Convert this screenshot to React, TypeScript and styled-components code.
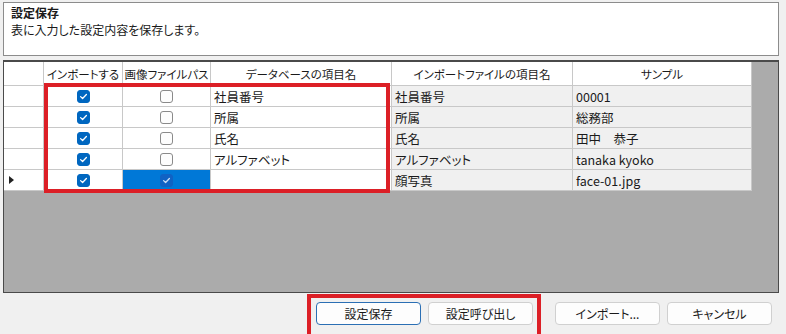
import styled, { createGlobalStyle } from "styled-components"

const GlobalStyle = createGlobalStyle`
  html, body {
    margin: 0;
    padding: 0;
    background: #f0f0f0;
    font-family: "Noto Sans CJK JP", "Noto Sans", sans-serif;
    font-size: 12px;
    color: #1a1a1a;
    font-feature-settings: "palt";
  }
`

const Page = styled.div`
  width: 786px;
  height: 334px;
  padding: 2px 7px 0 3px;
  box-sizing: border-box;
  display: flex;
  flex-direction: column;
  gap: 4px;
`

const Description = styled.div`
  height: 54px;
  box-sizing: border-box;
  background: #fff;
  border: 1px solid #8c8c8c;
  padding: 1px 7px 0;
  line-height: 17px;
`

const DescTitle = styled.div`
  font-weight: 700;
`

const GridWrap = styled.div`
  position: relative;
  height: 233px;
  box-sizing: border-box;
  background: #ababab;
  border: 1px solid #4a4a4a;
  border-width: 2px 1px 1px 1px;
`

const Grid = styled.div`
  display: grid;
  grid-template-columns: 40px 79px 88px 181px 181px 179px;
  width: max-content;
`

const Cell = styled.div<{ $head?: boolean; $center?: boolean; $ro?: boolean; $sel?: boolean }>`
  background: ${p => (p.$sel ? "#0078d7" : p.$ro ? "#f0f0f0" : "#fff")};
  border-right: 1px solid #c8c8c8;
  border-bottom: 1px solid #c8c8c8;
  display: flex;
  align-items: center;
  justify-content: ${p => (p.$center || p.$head ? "center" : "flex-start")};
  padding: 0 3px;
  box-sizing: border-box;
  white-space: nowrap;
  overflow: hidden;
  height: ${p => (p.$head ? "24px" : "21px")};
  font-size: ${p => (p.$head ? "11.5px" : "12.5px")};
`

const RowHead = styled(Cell)`
  padding-left: 5px;
  justify-content: flex-start;
`

const Arrow = styled.span`
  width: 0;
  height: 0;
  border-top: 4px solid transparent;
  border-bottom: 4px solid transparent;
  border-left: 5px solid #222;
`

const Box = styled.span<{ $checked?: boolean; $sel?: boolean }>`
  width: 13px;
  height: 13px;
  box-sizing: border-box;
  border-radius: 3px;
  display: flex;
  align-items: center;
  justify-content: center;
  background: ${p => (p.$sel ? "#1062c4" : p.$checked ? "#0067c0" : "#fdfdfd")};
  border: 1px solid ${p => (p.$checked ? (p.$sel ? "#1062c4" : "#0067c0") : "#8a8a8a")};
`

const Highlight = styled.div`
  position: absolute;
  left: 40px;
  top: 21px;
  width: 346px;
  height: 110px;
  border: 4px solid #dc1f26;
  box-sizing: border-box;
  pointer-events: none;
`

const Footer = styled.div`
  display: flex;
  align-items: flex-start;
  padding-left: 304px;
  height: 40px;
  margin-top: -3px;
`

const SaveGroup = styled.div`
  display: flex;
  gap: 7px;
  padding: 4px 4px 0 5px;
  height: 40px;
  box-sizing: border-box;
  border: 4px solid #dc1f26;
  border-bottom: none;
`

const Button = styled.button<{ $primary?: boolean }>`
  width: 105px;
  height: 23px;
  font-family: "Noto Sans CJK JP", "Noto Sans", sans-serif;
  font-feature-settings: "palt";
  font-size: 12px;
  color: #1a1a1a;
  background: #fdfdfd;
  border: 1px solid ${p => (p.$primary ? "#2b6fb4" : "#d0d0d0")};
  border-radius: 4px;
  padding: 0;
  line-height: 21px;
`

const OtherGroup = styled.div`
  display: flex;
  gap: 7px;
  margin-left: 14px;
  margin-top: 8px;
`

function Check({ checked, sel }: { checked?: boolean; sel?: boolean }) {
  return (
    <Box $checked={checked} $sel={sel}>
      {checked && (
        <svg width="9" height="9" viewBox="0 0 9 9">
          <path d="M1.6 4.6 L3.6 6.5 L7.4 2.5" fill="none" stroke={sel ? "#c9def5" : "#fff"} strokeWidth="1.3" strokeLinecap="round" strokeLinejoin="round" />
        </svg>
      )}
    </Box>
  )
}

const rows = [
  { db: "社員番号", file: "社員番号", sample: "00001", img: false },
  { db: "所属", file: "所属", sample: "総務部", img: false },
  { db: "氏名", file: "氏名", sample: "田中　恭子", img: false },
  { db: "アルファベット", file: "アルファベット", sample: "tanaka kyoko", img: false },
  { db: "", file: "顔写真", sample: "face-01.jpg", img: true },
]

export default function App() {
  return (
    <Page>
      <GlobalStyle />
      <Description>
        <DescTitle>設定保存</DescTitle>
        <div>表に入力した設定内容を保存します。</div>
      </Description>
      <GridWrap>
        <Grid>
          <Cell $head />
          <Cell $head>インポートする</Cell>
          <Cell $head>画像ファイルパス</Cell>
          <Cell $head>データベースの項目名</Cell>
          <Cell $head>インポートファイルの項目名</Cell>
          <Cell $head>サンプル</Cell>
          {rows.map((r, i) => {
            const last = i === rows.length - 1
            return [
              <RowHead key={`h${i}`}>{last && <Arrow />}</RowHead>,
              <Cell key={`a${i}`} $center><Check checked /></Cell>,
              <Cell key={`b${i}`} $center $sel={r.img}><Check checked={r.img} sel={r.img} /></Cell>,
              <Cell key={`c${i}`}>{r.db}</Cell>,
              <Cell key={`d${i}`} $ro>{r.file}</Cell>,
              <Cell key={`e${i}`} $ro>{r.sample}</Cell>,
            ]
          })}
        </Grid>
        <Highlight />
      </GridWrap>
      <Footer>
        <SaveGroup>
          <Button $primary>設定保存</Button>
          <Button>設定呼び出し</Button>
        </SaveGroup>
        <OtherGroup>
          <Button>インポート...</Button>
          <Button>キャンセル</Button>
        </OtherGroup>
      </Footer>
    </Page>
  )
}
